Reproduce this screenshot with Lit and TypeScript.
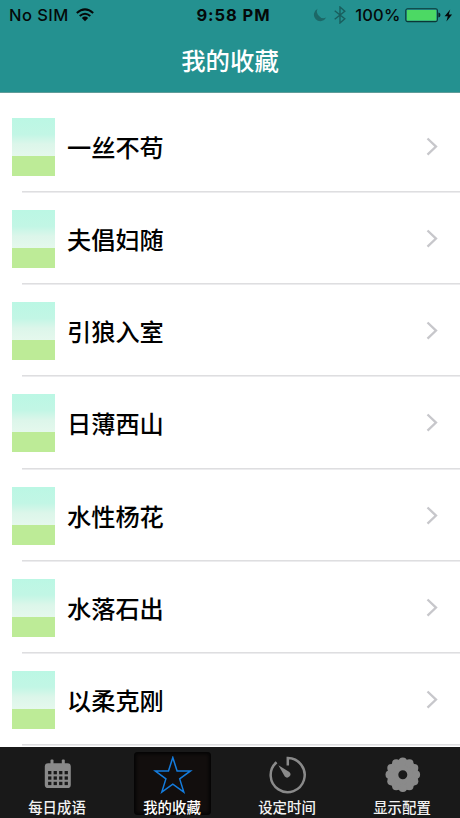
import { LitElement, html, css, svg } from "lit";
import { customElement, property } from "lit/decorators.js";

const wifi = html`<svg class="wifi" width="18" height="14" viewBox="0 0 18 14">
  <g fill="none" stroke="#050909" stroke-width="2">
    <path d="M.8 5Q9-2.2 17.2 5" />
    <path d="M3.7 8.1Q9 3.4 14.3 8.1" />
  </g>
  <path d="M5.8 10Q9 7.2 12.2 10L9 13.2Z" fill="#050909" />
</svg>`;

const moon = html`<svg class="moon" width="14" height="14" viewBox="0 0 14 14">
  <path d="M4.6.8A6.5 6.5 0 1 0 13.2 9.6A5.5 5.5 0 0 1 6.4 8.2A5.6 5.6 0 0 1 4.6.8Z" fill="#1c6867" />
</svg>`;

const bluetooth = html`<svg class="bt" width="12" height="18" viewBox="0 0 12 18">
  <path d="M.7 4.8L10.8 12.8L6 17V1L10.8 5.2L.7 13.2" fill="none" stroke="#195e5d" stroke-width="1.4" />
</svg>`;

const battery = html`<svg class="battery" width="36" height="15" viewBox="0 0 36 15">
  <rect x=".8" y=".8" width="31.6" height="12.8" rx="1.8" fill="#249190" stroke="#0b3736" stroke-width="1.1" />
  <rect x="1.9" y="1.9" width="29.4" height="10.6" rx=".6" fill="#4cd964" />
  <path d="M33.4 4.6Q35.5 5 35.5 7.1T33.4 9.6Z" fill="#0b2524" />
</svg>`;

const bolt = html`<svg class="bolt" width="9" height="13" viewBox="0 0 9 13">
  <path d="M6.2.4L.6 7.2H3.8L2.4 12.4L8.1 5.4H4.8Z" fill="#050909" />
</svg>`;

const chevron = html`<svg class="chevron" width="13" height="20" viewBox="0 0 13 20">
  <path d="M1.5 1.5L10 9.6L1.5 17.7" fill="none" stroke="#c7c7cb" stroke-width="2.3" />
</svg>`;

const calendar = svg`
  <rect x="6.8" y="7.3" width="26" height="24.8" rx="3.4" fill="#8a8a8a"/>
  <rect x="12.5" y="3.4" width="3" height="5" rx="1" fill="#8a8a8a"/>
  <rect x="23.8" y="3.4" width="3" height="5" rx="1" fill="#8a8a8a"/>
  ${[0, 1, 2].map((r) =>
    [0, 1, 2, 3].map(
      (c) => svg`<rect x=${10.1 + c * 5.5} y=${15 + r * 5.4} width="3.3" height="3.3" fill="#191919"/>`
    )
  )}`;

const star = svg`<path d="M19.8 1.6L24.1 14.9H37.5L26.7 22.9L30.8 36.1L19.8 28.1L8.8 36.1L12.9 22.9L2.1 14.9H15.5Z"
  fill="none" stroke="#147cdd" stroke-width="1.5"/>`;

const timer = svg`
  <path d="M19.8 9.4V2.1A17 17 0 1 1 8.6 6.2" fill="none" stroke="#8a8a8a" stroke-width="2.5"/>
  <path d="M10.4 9.3L21.4 16A3.2 3.2 0 1 1 16.8 20.6Z" fill="#8a8a8a"/>`;

const gear = svg`
  <circle cx="19.8" cy="18.7" r="10" fill="none" stroke="#8a8a8a" stroke-width="11"/>
  ${Array.from({ length: 12 }, (_, i) => {
    const a = (i * 30 * Math.PI) / 180;
    return svg`<circle cx=${19.8 + 13.2 * Math.sin(a)} cy=${18.7 - 13.2 * Math.cos(a)} r="4.1" fill="#8a8a8a"/>`;
  })}`;

@customElement("status-bar")
export class StatusBar extends LitElement {
  static styles = css`
    :host {
      display: grid;
      grid-template-columns: 1fr auto 1fr;
      align-items: center;
      height: 30px;
      padding: 0 7px 0 9px;
      color: #050909;
      font: 500 16.5px/30px Inter, sans-serif;
    }
    svg { display: block; flex: none; }
    .side { display: flex; align-items: center; }
    .right { justify-content: flex-end; }
    .carrier { letter-spacing: 0.45px; }
    .wifi { margin-left: 7.5px; }
    .clock { font-weight: 700; letter-spacing: 0.95px; margin-left: 5px; }
    .moon { margin-right: 7px; }
    .bt { margin-right: 9px; }
    .percent { letter-spacing: 0.2px; }
    .battery { margin-left: 4px; }
    .bolt { margin-left: 3.5px; }
  `;
  render() {
    return html`
      <div class="side"><span class="carrier">No SIM</span>${wifi}</div>
      <div class="clock">9:58 PM</div>
      <div class="side right">${moon}${bluetooth}<span class="percent">100%</span>${battery}${bolt}</div>
    `;
  }
}

@customElement("idiom-row")
export class IdiomRow extends LitElement {
  @property() label = "";
  static styles = css`
    :host {
      display: flex;
      align-items: center;
      box-sizing: border-box;
      height: 92.14px;
      padding: 0 21px 0 12px;
      background: linear-gradient(#dedee0 50%, #ececee 50%) 22px 100% / 100% 2px no-repeat;
    }
    .thumb {
      width: 43px;
      height: 58px;
      background: linear-gradient(#bbf7e4 0%, #c2f6e5 28%, #dcf6ea 45%, #e5f8ed 66%, #bdeb97 66%, #bdeb97 100%);
    }
    .label {
      flex: 1;
      margin-left: 12px;
      color: #000;
      font: 500 24.2px/36px "Noto Sans CJK SC", sans-serif;
    }
    .chevron { display: block; }
  `;
  render() {
    return html`<div class="thumb"></div><div class="label">${this.label}</div>${chevron}`;
  }
}

@customElement("app-root")
export class AppRoot extends LitElement {
  static styles = css`
    :host {
      display: flex;
      flex-direction: column;
      height: 818px;
      overflow: hidden;
      background: #fff;
      font-family: "Noto Sans CJK SC", sans-serif;
    }
    .head {
      flex: none;
      box-sizing: border-box;
      height: 93px;
      background: #249190;
      border-bottom: 1px solid #5f9c99;
    }
    .title {
      text-align: center;
      color: #fff;
      font-size: 24.4px;
      font-weight: 500;
      line-height: 60px;
    }
    .list { flex: 1; min-height: 0; padding-top: 8px; overflow: hidden; }
    .tabs {
      flex: none;
      display: grid;
      grid-template-columns: repeat(4, 1fr);
      height: 71px;
      background: #191919;
    }
    .tab {
      display: flex;
      flex-direction: column;
      align-items: center;
      box-sizing: border-box;
      width: 77px;
      height: 63px;
      margin: 5px 0 0 18.5px;
      padding-top: 4px;
      border-radius: 4px;
      color: #f2f2f2;
      font-size: 14.4px;
      font-weight: 500;
      line-height: 22px;
      white-space: nowrap;
    }
    .active { background: #120e0d; box-shadow: inset 0 0 3px 2px #050505; color: #fff; }
    .icon { display: block; flex: none; margin: 0 0 2px 1px; }
  `;

  private rows = ["一丝不苟", "夫倡妇随", "引狼入室", "日薄西山", "水性杨花", "水落石出", "以柔克刚"];
  private tabs = [
    { name: "每日成语", icon: calendar, active: false },
    { name: "我的收藏", icon: star, active: true },
    { name: "设定时间", icon: timer, active: false },
    { name: "显示配置", icon: gear, active: false },
  ];

  render() {
    return html`
      <div class="head">
        <status-bar></status-bar>
        <div class="title">我的收藏</div>
      </div>
      <div class="list">${this.rows.map((r) => html`<idiom-row .label=${r}></idiom-row>`)}</div>
      <div class="tabs">
        ${this.tabs.map(
          (t) => html`<div class="tab ${t.active ? "active" : ""}">
            <svg class="icon" width="40" height="38" viewBox="0 0 40 38">${t.icon}</svg>
            <span>${t.name}</span>
          </div>`
        )}
      </div>
    `;
  }
}
